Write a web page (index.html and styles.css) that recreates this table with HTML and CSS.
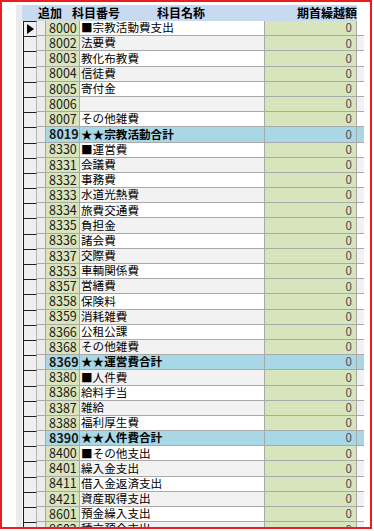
FILE: index.html
```html
<!DOCTYPE html>
<html lang="ja">
<head>
<meta charset="utf-8">
<link rel="stylesheet" href="styles.css">
</head>
<body>
<div class="frame">
  <div class="sheet">
    <div class="band"></div>
    <div class="table">
      <div class="head">
        <span class="h-add">追加</span>
        <span class="h-code">科目番号</span>
        <span class="h-name">科目名称</span>
        <span class="h-amt">期首繰越額</span>
      </div>
      <div class="row"><div class="sel"><svg class="arrow" width="7" height="10" viewBox="0 0 7 10"><polygon points="0,0 7,5 0,10" fill="#000"/></svg></div><div class="chk"></div><div class="code">8000</div><div class="name">■宗教活動費支出</div><div class="amt">0</div><div class="tail"></div></div>
      <div class="row alt"><div class="sel"></div><div class="chk"></div><div class="code">8002</div><div class="name">法要費</div><div class="amt">0</div><div class="tail"></div></div>
      <div class="row"><div class="sel"></div><div class="chk"></div><div class="code">8003</div><div class="name">教化布教費</div><div class="amt">0</div><div class="tail"></div></div>
      <div class="row alt"><div class="sel"></div><div class="chk"></div><div class="code">8004</div><div class="name">信徒費</div><div class="amt">0</div><div class="tail"></div></div>
      <div class="row"><div class="sel"></div><div class="chk"></div><div class="code">8005</div><div class="name">寄付金</div><div class="amt">0</div><div class="tail"></div></div>
      <div class="row alt"><div class="sel"></div><div class="chk"></div><div class="code">8006</div><div class="name"></div><div class="amt">0</div><div class="tail"></div></div>
      <div class="row"><div class="sel"></div><div class="chk"></div><div class="code">8007</div><div class="name">その他雑費</div><div class="amt">0</div><div class="tail"></div></div>
      <div class="row total"><div class="sel"></div><div class="chk"></div><div class="code">8019</div><div class="name">★★宗教活動合計</div><div class="amt">0</div><div class="tail"></div></div>
      <div class="row"><div class="sel"></div><div class="chk"></div><div class="code">8330</div><div class="name">■運営費</div><div class="amt">0</div><div class="tail"></div></div>
      <div class="row alt"><div class="sel"></div><div class="chk"></div><div class="code">8331</div><div class="name">会議費</div><div class="amt">0</div><div class="tail"></div></div>
      <div class="row"><div class="sel"></div><div class="chk"></div><div class="code">8332</div><div class="name">事務費</div><div class="amt">0</div><div class="tail"></div></div>
      <div class="row alt"><div class="sel"></div><div class="chk"></div><div class="code">8333</div><div class="name">水道光熱費</div><div class="amt">0</div><div class="tail"></div></div>
      <div class="row"><div class="sel"></div><div class="chk"></div><div class="code">8334</div><div class="name">旅費交通費</div><div class="amt">0</div><div class="tail"></div></div>
      <div class="row alt"><div class="sel"></div><div class="chk"></div><div class="code">8335</div><div class="name">負担金</div><div class="amt">0</div><div class="tail"></div></div>
      <div class="row"><div class="sel"></div><div class="chk"></div><div class="code">8336</div><div class="name">諸会費</div><div class="amt">0</div><div class="tail"></div></div>
      <div class="row alt"><div class="sel"></div><div class="chk"></div><div class="code">8337</div><div class="name">交際費</div><div class="amt">0</div><div class="tail"></div></div>
      <div class="row"><div class="sel"></div><div class="chk"></div><div class="code">8353</div><div class="name">車輌関係費</div><div class="amt">0</div><div class="tail"></div></div>
      <div class="row alt"><div class="sel"></div><div class="chk"></div><div class="code">8357</div><div class="name">営繕費</div><div class="amt">0</div><div class="tail"></div></div>
      <div class="row"><div class="sel"></div><div class="chk"></div><div class="code">8358</div><div class="name">保険料</div><div class="amt">0</div><div class="tail"></div></div>
      <div class="row alt"><div class="sel"></div><div class="chk"></div><div class="code">8359</div><div class="name">消耗雑費</div><div class="amt">0</div><div class="tail"></div></div>
      <div class="row"><div class="sel"></div><div class="chk"></div><div class="code">8366</div><div class="name">公租公課</div><div class="amt">0</div><div class="tail"></div></div>
      <div class="row alt"><div class="sel"></div><div class="chk"></div><div class="code">8368</div><div class="name">その他雑費</div><div class="amt">0</div><div class="tail"></div></div>
      <div class="row total"><div class="sel"></div><div class="chk"></div><div class="code">8369</div><div class="name">★★運営費合計</div><div class="amt">0</div><div class="tail"></div></div>
      <div class="row alt"><div class="sel"></div><div class="chk"></div><div class="code">8380</div><div class="name">■人件費</div><div class="amt">0</div><div class="tail"></div></div>
      <div class="row"><div class="sel"></div><div class="chk"></div><div class="code">8386</div><div class="name">給料手当</div><div class="amt">0</div><div class="tail"></div></div>
      <div class="row alt"><div class="sel"></div><div class="chk"></div><div class="code">8387</div><div class="name">雑給</div><div class="amt">0</div><div class="tail"></div></div>
      <div class="row"><div class="sel"></div><div class="chk"></div><div class="code">8388</div><div class="name">福利厚生費</div><div class="amt">0</div><div class="tail"></div></div>
      <div class="row total"><div class="sel"></div><div class="chk"></div><div class="code">8390</div><div class="name">★★人件費合計</div><div class="amt">0</div><div class="tail"></div></div>
      <div class="row"><div class="sel"></div><div class="chk"></div><div class="code">8400</div><div class="name">■その他支出</div><div class="amt">0</div><div class="tail"></div></div>
      <div class="row alt"><div class="sel"></div><div class="chk"></div><div class="code">8401</div><div class="name">繰入金支出</div><div class="amt">0</div><div class="tail"></div></div>
      <div class="row"><div class="sel"></div><div class="chk"></div><div class="code">8411</div><div class="name">借入金返済支出</div><div class="amt">0</div><div class="tail"></div></div>
      <div class="row alt"><div class="sel"></div><div class="chk"></div><div class="code">8421</div><div class="name">資産取得支出</div><div class="amt">0</div><div class="tail"></div></div>
      <div class="row"><div class="sel"></div><div class="chk"></div><div class="code">8601</div><div class="name">預金繰入支出</div><div class="amt">0</div><div class="tail"></div></div>
      <div class="row alt"><div class="sel"></div><div class="chk"></div><div class="code">8602</div><div class="name">積立預金支出</div><div class="amt">0</div><div class="tail"></div></div>
    </div>
  </div>
</div>
</body>
</html>
```

FILE: styles.css
```css
* { box-sizing: border-box; }
html, body {
  margin: 0;
  padding: 0;
  background: #fff;
}
body {
  width: 374px;
  height: 531px;
  overflow: hidden;
  font-family: "Noto Sans CJK JP", "Noto Sans", sans-serif;
  color: #000;
}
.frame {
  width: 372px;
  height: 529px;
  border: 2px solid #ee1c1c;
  padding: 3px 0 0 14px;
  overflow: hidden;
}
.sheet {
  display: flex;
  height: 100%;
}
.band {
  width: 6px;
  flex: none;
  background: #ebebeb;
}
.table {
  width: 342px;
  flex: none;
}
.head {
  display: flex;
  align-items: center;
  height: 16px;
  width: 335px;
  background: #c8daf0;
  font-size: 12px;
  font-weight: bold;
  line-height: 1;
  padding-left: 16px;
}
.h-code { margin-left: 10px; }
.h-name { margin-left: 37px; }
.h-amt { margin-left: auto; }
.row {
  display: grid;
  grid-template-columns: 15px 9px 34px 185px 92px 7px;
  height: 15.2px;
  line-height: 1;
}
.row > div {
  border-bottom: 1px solid #a9a9a9;
  display: flex;
  align-items: center;
  white-space: nowrap;
}
.row > .sel {
  background: #efefef;
  border-top: 1px solid #1e1e1e;
  border-left: 1px solid #1e1e1e;
  border-right: 1px solid #b5b5b5;
  border-bottom: none;
  margin-left: 1px;
  justify-content: center;
}
.arrow { display: block; }
.chk {
  background: #ececec;
  border-right: 1px solid #a9a9a9;
}
.code {
  background: #d8e4bc;
  border-right: 1px solid #a9a9a9;
  font-size: 12.5px;
  color: #1a1a1a;
  padding-left: 3px;
}
.name {
  background: #fff;
  border-right: 1px solid #a9a9a9;
  font-size: 11.6px;
  padding-left: 1px;
}
.amt {
  background: #d8e4bc;
  border-right: 1px solid #a9a9a9;
  justify-content: flex-end;
  padding-right: 4px;
  font-size: 11.5px;
  color: #4a4a4a;
}
.tail { background: #fff; }
.row.alt .name,
.row.alt .tail { background: #f2f2f2; }
.row.total .code,
.row.total .name,
.row.total .amt,
.row.total .tail { background: #a8d8e6; }
.row.total .code,
.row.total .name { font-weight: bold; }
```
